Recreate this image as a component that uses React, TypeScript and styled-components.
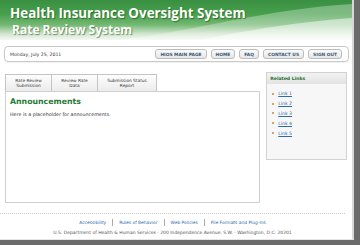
import React from "react";
import styled, { createGlobalStyle } from "styled-components";

const GlobalStyle = createGlobalStyle`
  html, body {
    margin: 0;
    padding: 0;
    background: #6b6b6b;
  }
  body {
    font-family: "DejaVu Sans", Verdana, sans-serif;
    width: 360px;
    height: 245px;
    overflow: hidden;
  }
`;

const navItems = ["HIOS MAIN PAGE", "HOME", "FAQ", "CONTACT US", "SIGN OUT"];
const tabs = [
  { lines: ["Rate Review", "Submission"], w: 47 },
  { lines: ["Review Rate", "Data"], w: 47 },
  { lines: ["Submission Status", "Report"], w: 60 },
];
const links = ["Link 1", "Link 2", "Link 3", "Link 4", "Link 5"];
const footerLinks = ["Accessibility", "Rules of Behavior", "Web Policies", "File Formats and Plug-Ins"];

function App() {
  return (
    <>
      <GlobalStyle />
      <Page>
        <Header>
          <Swoosh viewBox="0 0 352 40" preserveAspectRatio="none">
            <path d="M120 40 C200 30 260 10 352 4 L352 40 Z" fill="rgba(255,255,255,0.3)" />
            <path d="M200 40 C260 28 300 22 352 18 L352 40 Z" fill="rgba(255,255,255,0.5)" />
          </Swoosh>
          <Title>Health Insurance Oversight System</Title>
          <SubTitle>Rate Review System</SubTitle>
        </Header>
        <DateBar>
          <DateText>Monday, July 25, 2011</DateText>
          <Nav>
            {navItems.map(item => (
              <NavButton key={item}>{item}</NavButton>
            ))}
          </Nav>
        </DateBar>
        <Main>
          <Left>
            <Tabs>
              {tabs.map(tab => (
                <Tab key={tab.lines.join(" ")} $w={tab.w}>
                  {tab.lines[0]}
                  <br />
                  {tab.lines[1]}
                </Tab>
              ))}
            </Tabs>
            <ContentBox>
              <Heading>Announcements</Heading>
              <Text>Here is a placeholder for announcements.</Text>
            </ContentBox>
          </Left>
          <Sidebar>
            <SideHead>Related Links</SideHead>
            <LinkList>
              {links.map(link => (
                <LinkItem key={link}>
                  <a href="#">{link}</a>
                </LinkItem>
              ))}
            </LinkList>
          </Sidebar>
        </Main>
        <Footer>
          <FooterLinks>
            {footerLinks.map((l, i) => (
              <React.Fragment key={l}>
                {i > 0 && <Sep />}
                <FootLink href="#">{l}</FootLink>
              </React.Fragment>
            ))}
          </FooterLinks>
          <Address>
            U.S. Department of Health &amp; Human Services · 200 Independence Avenue, S.W. · Washington, D.C. 20201
          </Address>
        </Footer>
      </Page>
    </>
  );
}

const Page = styled.div`
  width: 352px;
  height: 239px;
  background: #fff;
  border-right: 2px solid #d8d8d8;
  border-bottom: 1px solid #e4e4e4;
  display: flex;
  flex-direction: column;
`;

const Header = styled.div`
  position: relative;
  height: 40px;
  padding: 5px 0 0 10px;
  box-sizing: border-box;
  background: linear-gradient(180deg, #3a8f42 0%, #47a04c 35%, #74b873 62%, #d2e7d0 85%, #f5f8f3 100%);
  overflow: hidden;
`;

const Swoosh = styled.svg`
  position: absolute;
  left: 0;
  top: 0;
  width: 100%;
  height: 100%;
`;

const Title = styled.div`
  position: relative;
  font-family: "Open Sans", "DejaVu Sans", sans-serif;
  font-weight: 700;
  font-size: 13.4px;
  line-height: 16px;
  color: #fff;
  text-shadow: 1px 1px 1px rgba(0, 60, 0, 0.5);
`;

const SubTitle = styled.div`
  position: relative;
  margin: 2px 0 0 2px;
  font-family: "Open Sans", "DejaVu Sans", sans-serif;
  font-weight: 700;
  font-size: 12px;
  line-height: 13px;
  color: #fff;
  text-shadow: 1px 1px 1px rgba(0, 60, 0, 0.5);
`;

const DateBar = styled.div`
  margin: 6px 3px 0 4px;
  height: 16px;
  border: 1px solid #c9c9c9;
  border-radius: 4px;
  display: flex;
  align-items: center;
  justify-content: space-between;
  padding: 0 6px 0 5px;
  box-sizing: border-box;
  box-shadow: 0 1px 1px rgba(0, 0, 0, 0.06);
`;

const DateText = styled.div`
  font-size: 4.6px;
  color: #333;
`;

const Nav = styled.div`
  display: flex;
  gap: 4px;
`;

const NavButton = styled.div`
  height: 10px;
  padding: 0 4px;
  display: flex;
  align-items: center;
  font-size: 4.4px;
  font-weight: 700;
  color: #3d5877;
  border: 1px solid #bcbcbc;
  border-radius: 3px;
  box-sizing: border-box;
  background: linear-gradient(180deg, #fbfbfb 0%, #e6e6e6 100%);
`;

const Main = styled.div`
  display: flex;
  gap: 6px;
  margin: 10px 5px 0 5px;
`;

const Left = styled.div`
  width: 256px;
  display: flex;
  flex-direction: column;
`;

const Tabs = styled.div`
  display: flex;
  margin-top: 2px;
`;

const Tab = styled.div<{ $w: number }>`
  width: ${p => p.$w}px;
  height: 17px;
  box-sizing: border-box;
  border: 1px solid #c4c4c4;
  border-bottom: none;
  margin-right: -1px;
  display: flex;
  align-items: center;
  justify-content: center;
  text-align: center;
  font-size: 4.3px;
  line-height: 5px;
  color: #333;
  background: linear-gradient(180deg, #fdfdfd 0%, #ececec 100%);
`;

const ContentBox = styled.div`
  height: 112px;
  border: 1px solid #cfcfcf;
  box-sizing: border-box;
  padding: 4px 4px;
`;

const Heading = styled.div`
  font-family: "DejaVu Sans", Verdana, sans-serif;
  font-weight: 700;
  font-size: 7.8px;
  color: #1f7a35;
  line-height: 11px;
`;

const Text = styled.div`
  margin-top: 5px;
  font-size: 4.8px;
  color: #333;
`;

const Sidebar = styled.div`
  width: 81px;
  height: 88px;
  border: 1px solid #d2d2d2;
  box-sizing: border-box;
  background: #f7f7f7;
`;

const SideHead = styled.div`
  height: 11px;
  padding-left: 3px;
  display: flex;
  align-items: center;
  font-size: 4.6px;
  font-weight: 700;
  color: #1f6f33;
  background: linear-gradient(180deg, #f2f2f2 0%, #e3e3e3 100%);
`;

const LinkList = styled.ul`
  list-style: none;
  margin: 5px 0 0 0;
  padding: 0 0 0 5px;
`;

const LinkItem = styled.li`
  height: 9.8px;
  display: flex;
  align-items: center;
  font-size: 4.6px;
  &::before {
    content: "";
    width: 2px;
    height: 2px;
    border-radius: 1px;
    background: #d9822b;
    margin-right: 4px;
  }
  & a {
    color: #2c6aa8;
  }
`;

const Footer = styled.div`
  margin: 10px 7px 0 0;
  border-top: 1px dotted #c8c8c8;
  display: flex;
  flex-direction: column;
  align-items: center;
`;

const FooterLinks = styled.div`
  margin-top: 5px;
  display: flex;
  align-items: center;
  gap: 6px;
`;

const FootLink = styled.a`
  font-size: 4.4px;
  color: #2c6aa8;
  text-decoration: none;
`;

const Sep = styled.span`
  width: 1px;
  height: 7px;
  background: #aaa;
`;

const Address = styled.div`
  margin-top: 4px;
  font-size: 4.5px;
  color: #555;
`;

export default App;
